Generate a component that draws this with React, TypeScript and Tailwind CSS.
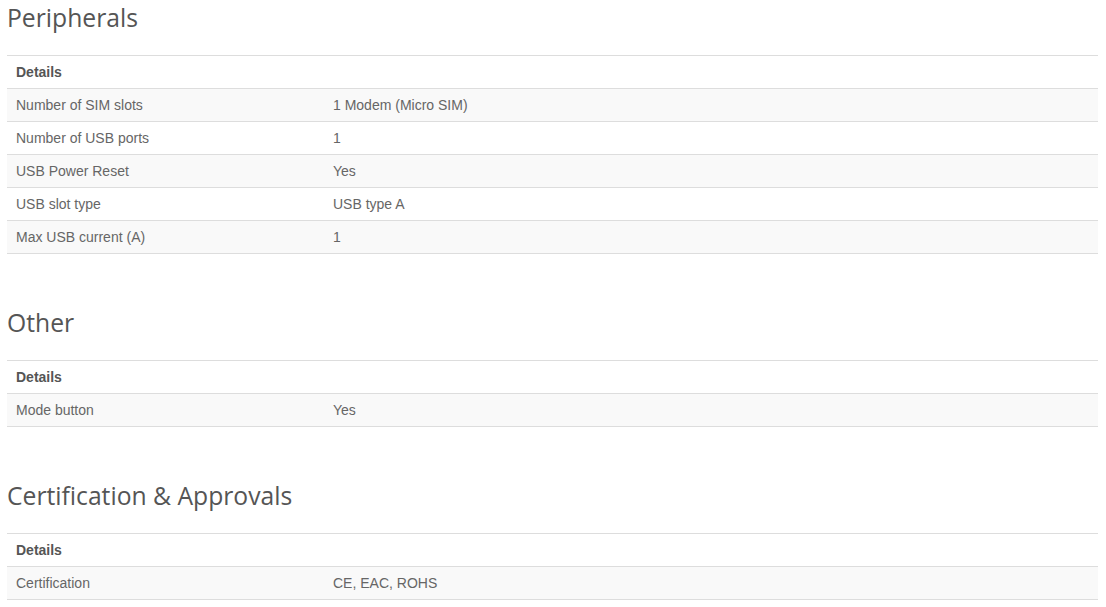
const sections: { title: string; rows: [string, string][] }[] = [
  {
    title: 'Peripherals',
    rows: [
      ['Number of SIM slots', '1 Modem (Micro SIM)'],
      ['Number of USB ports', '1'],
      ['USB Power Reset', 'Yes'],
      ['USB slot type', 'USB type A'],
      ['Max USB current (A)', '1'],
    ],
  },
  {
    title: 'Other',
    rows: [['Mode button', 'Yes']],
  },
  {
    title: 'Certification & Approvals',
    rows: [['Certification', 'CE, EAC, ROHS']],
  },
]

function SpecTable({ rows }: { rows: [string, string][] }) {
  return (
    <div className="border-b border-[#dddddd] font-['Liberation_Sans',Arial,sans-serif] text-[14px] leading-[16px]">
      <div className="flex h-[33px] items-center border-t border-[#dddddd] bg-white px-[9px] font-bold text-[#555555]">
        Details
      </div>
      {rows.map(([label, value], i) => (
        <div
          key={label}
          className={`grid h-[33px] grid-cols-[318px_1fr] items-center border-t border-[#dddddd] text-[#666666] ${
            i % 2 === 0 ? 'bg-[#f9f9f9]' : 'bg-white'
          }`}
        >
          <div className="px-[9px]">{label}</div>
          <div className="px-[8px]">{value}</div>
        </div>
      ))}
    </div>
  )
}

export default function App() {
  return (
    <div className="min-h-screen bg-white pt-[4px] pl-[7px] pr-[8px]">
      {sections.map((s, idx) => (
        <section key={s.title} className={idx > 0 ? 'mt-[55px]' : ''}>
          <h3 className="mb-[24px] font-['Open_Sans',sans-serif] text-[24.7px] leading-[27px] text-[#555555]">
            {s.title}
          </h3>
          <SpecTable rows={s.rows} />
        </section>
      ))}
    </div>
  )
}
